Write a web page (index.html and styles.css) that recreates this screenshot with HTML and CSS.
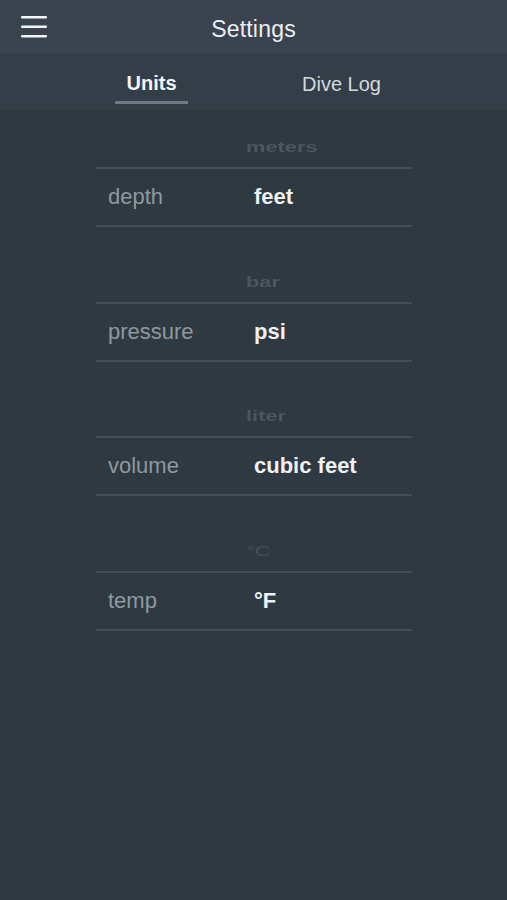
FILE: index.html
```html
<!DOCTYPE html>
<html>
<head>
<meta charset="utf-8">
<link rel="stylesheet" href="styles.css">
</head>
<body>
<div class="app">
  <header class="topbar">
    <div class="menu">
      <svg width="26" height="22" viewBox="0 0 26 22"><rect x="0" y="0" width="26" height="2.6" rx="1" fill="#f2f4f6"/><rect x="0" y="9.5" width="26" height="2.6" rx="1" fill="#f2f4f6"/><rect x="0" y="19" width="26" height="2.6" rx="1" fill="#f2f4f6"/></svg>
    </div>
    <div class="title">Settings</div>
  </header>
  <nav class="tabs">
    <div class="tab active">Units</div>
    <div class="tab">Dive Log</div>
  </nav>
  <main class="list">
    <section class="group">
      <div class="ghost"><span>meters</span></div>
      <div class="row"><span class="label">depth</span><span class="value">feet</span></div>
    </section>
    <section class="group">
      <div class="ghost"><span>bar</span></div>
      <div class="row"><span class="label">pressure</span><span class="value">psi</span></div>
    </section>
    <section class="group">
      <div class="ghost"><span>liter</span></div>
      <div class="row"><span class="label">volume</span><span class="value">cubic feet</span></div>
    </section>
    <section class="group">
      <div class="ghost faint"><span>°C</span></div>
      <div class="row"><span class="label">temp</span><span class="value">°F</span></div>
    </section>
  </main>
</div>
</body>
</html>
```

FILE: styles.css
```css
* { box-sizing: border-box; }
html, body {
  margin: 0;
  padding: 0;
  background: #2e3942;
  font-family: "Liberation Sans", Arial, sans-serif;
}
.app {
  width: 507px;
  height: 900px;
  background: #2e3942;
  display: flex;
  flex-direction: column;
}
.topbar {
  height: 53px;
  background: #3a4450;
  display: flex;
  align-items: center;
  justify-content: center;
  position: relative;
}
.menu {
  position: absolute;
  left: 21px;
  top: 16px;
  line-height: 0;
}
.title {
  color: #eceef0;
  font-size: 23px;
  margin-top: 5px;
  letter-spacing: 0.2px;
}
.tabs {
  height: 57px;
  background: #343e48;
  display: grid;
  grid-template-columns: 115px 73px 1fr;
  align-items: stretch;
}
.tab {
  display: flex;
  align-items: center;
  justify-content: center;
  font-size: 20px;
  color: #d3d8dc;
  padding-top: 5px;
}
.tab.active {
  grid-column: 2;
  font-weight: bold;
  color: #f3f5f7;
  border-bottom: 3px solid #6d7a84;
  margin-bottom: 6px;
  padding-top: 13px;
}
.tab:not(.active) {
  grid-column: 3;
  justify-content: flex-start;
  padding-left: 114px;
}
.list {
  padding: 13px 0 0 96px;
  display: flex;
  flex-direction: column;
  gap: 30.5px;
}
.group {
  width: 316px;
}
.ghost {
  height: 44px;
  padding-left: 150px;
  display: flex;
  align-items: flex-end;
  padding-bottom: 10px;
}
.ghost span {
  display: inline-block;
  font-size: 21px;
  font-weight: bold;
  color: #4a5660;
  transform: scaleX(1.04) scaleY(0.72);
  transform-origin: left center;
  line-height: 1;
  filter: blur(0.4px);
}
.ghost.faint span {
  color: #434f58;
  font-weight: normal;
}
.row {
  height: 60px;
  border-top: 2px solid #434f58;
  border-bottom: 2px solid #434f58;
  display: flex;
  align-items: center;
  font-size: 22px;
}
.label {
  width: 158px;
  padding-left: 12px;
  color: #8f989f;
}
.value {
  color: #eff1f3;
  font-weight: bold;
}
```
